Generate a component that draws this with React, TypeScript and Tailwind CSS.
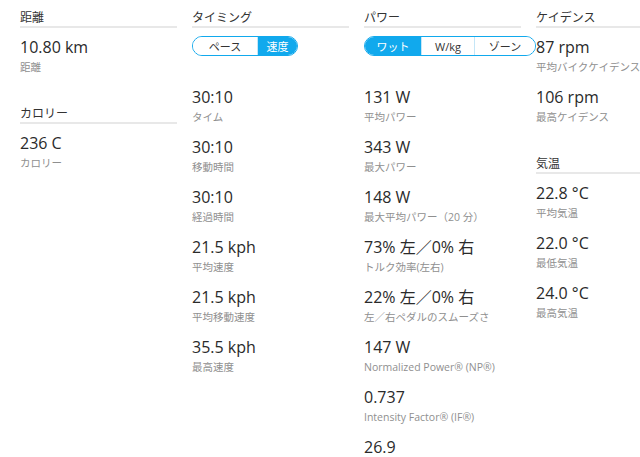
type Stat = { value: string; label: string };

type Section = {
  title: string;
  toggle?: { labels: string[]; widths: string[]; active: number };
  stats: Stat[];
};

const columns: Section[][] = [
  [
    { title: '距離', stats: [{ value: '10.80 km', label: '距離' }] },
    { title: 'カロリー', stats: [{ value: '236 C', label: 'カロリー' }] },
  ],
  [
    {
      title: 'タイミング',
      toggle: { labels: ['ペース', '速度'], widths: ['w-[64px]', 'w-[40px]'], active: 1 },
      stats: [
        { value: '30:10', label: 'タイム' },
        { value: '30:10', label: '移動時間' },
        { value: '30:10', label: '経過時間' },
        { value: '21.5 kph', label: '平均速度' },
        { value: '21.5 kph', label: '平均移動速度' },
        { value: '35.5 kph', label: '最高速度' },
      ],
    },
  ],
  [
    {
      title: 'パワー',
      toggle: {
        labels: ['ワット', 'W/kg', 'ゾーン'],
        widths: ['w-[56px]', 'w-[53px]', 'w-[61px]'],
        active: 0,
      },
      stats: [
        { value: '131 W', label: '平均パワー' },
        { value: '343 W', label: '最大パワー' },
        { value: '148 W', label: '最大平均パワー（20 分）' },
        { value: '73% 左／0% 右', label: 'トルク効率(左右)' },
        { value: '22% 左／0% 右', label: '左／右ペダルのスムーズさ' },
        { value: '147 W', label: 'Normalized Power® (NP®)' },
        { value: '0.737', label: 'Intensity Factor® (IF®)' },
        { value: '26.9', label: 'Training Stress Score® (TSS®)' },
      ],
    },
  ],
  [
    {
      title: 'ケイデンス',
      stats: [
        { value: '87 rpm', label: '平均バイクケイデンス' },
        { value: '106 rpm', label: '最高ケイデンス' },
      ],
    },
    {
      title: '気温',
      stats: [
        { value: '22.8 °C', label: '平均気温' },
        { value: '22.0 °C', label: '最低気温' },
        { value: '24.0 °C', label: '最高気温' },
      ],
    },
  ],
];

function Toggle({ labels, widths, active }: { labels: string[]; widths: string[]; active: number }) {
  return (
    <div className="flex h-[20px] w-max rounded-full border border-[#11a9ed] overflow-hidden mb-[30px]">
      {labels.map((l, i) => (
        <div
          key={l}
          className={
            'flex items-center justify-center text-[11px] leading-none ' +
            widths[i] +
            (i > 0 ? ' border-l border-[#c5e6f7]' : '') +
            (i === active ? ' bg-[#11a9ed] text-white' : ' bg-white text-[#333]')
          }
        >
          {l}
        </div>
      ))}
    </div>
  );
}

function StatBlock({ section }: { section: Section }) {
  // last item's mb-[10px] collapses into this one
  return (
    <div className="mb-[30px]">
      <h2 className="text-[12px] leading-[16px] text-[#333] border-b-2 border-[#e8e8e8] mb-2 w-[157px]">
        {section.title}
      </h2>
      {section.toggle && <Toggle {...section.toggle} />}
      {section.stats.map((s, i) => (
        <div key={i} className="mb-[10px]">
          <div className="text-[16px] leading-[22px] text-[#2a2a2a] whitespace-nowrap">{s.value}</div>
          <div className="text-[10.5px] leading-[18px] text-[#8f8f8f] whitespace-nowrap">{s.label}</div>
        </div>
      ))}
    </div>
  );
}

function App() {
  return (
    <div
      className="h-screen w-full overflow-hidden bg-white"
      style={{ fontFamily: '"Open Sans", "Noto Sans CJK JP", sans-serif' }}
    >
      <div className="flex gap-[15px] pl-5 pt-[10px]">
        {columns.map((col, ci) => (
          <div key={ci} className="w-[157px] shrink-0">
            {col.map((section) => (
              <StatBlock key={section.title} section={section} />
            ))}
          </div>
        ))}
      </div>
    </div>
  );
}

export default App;
